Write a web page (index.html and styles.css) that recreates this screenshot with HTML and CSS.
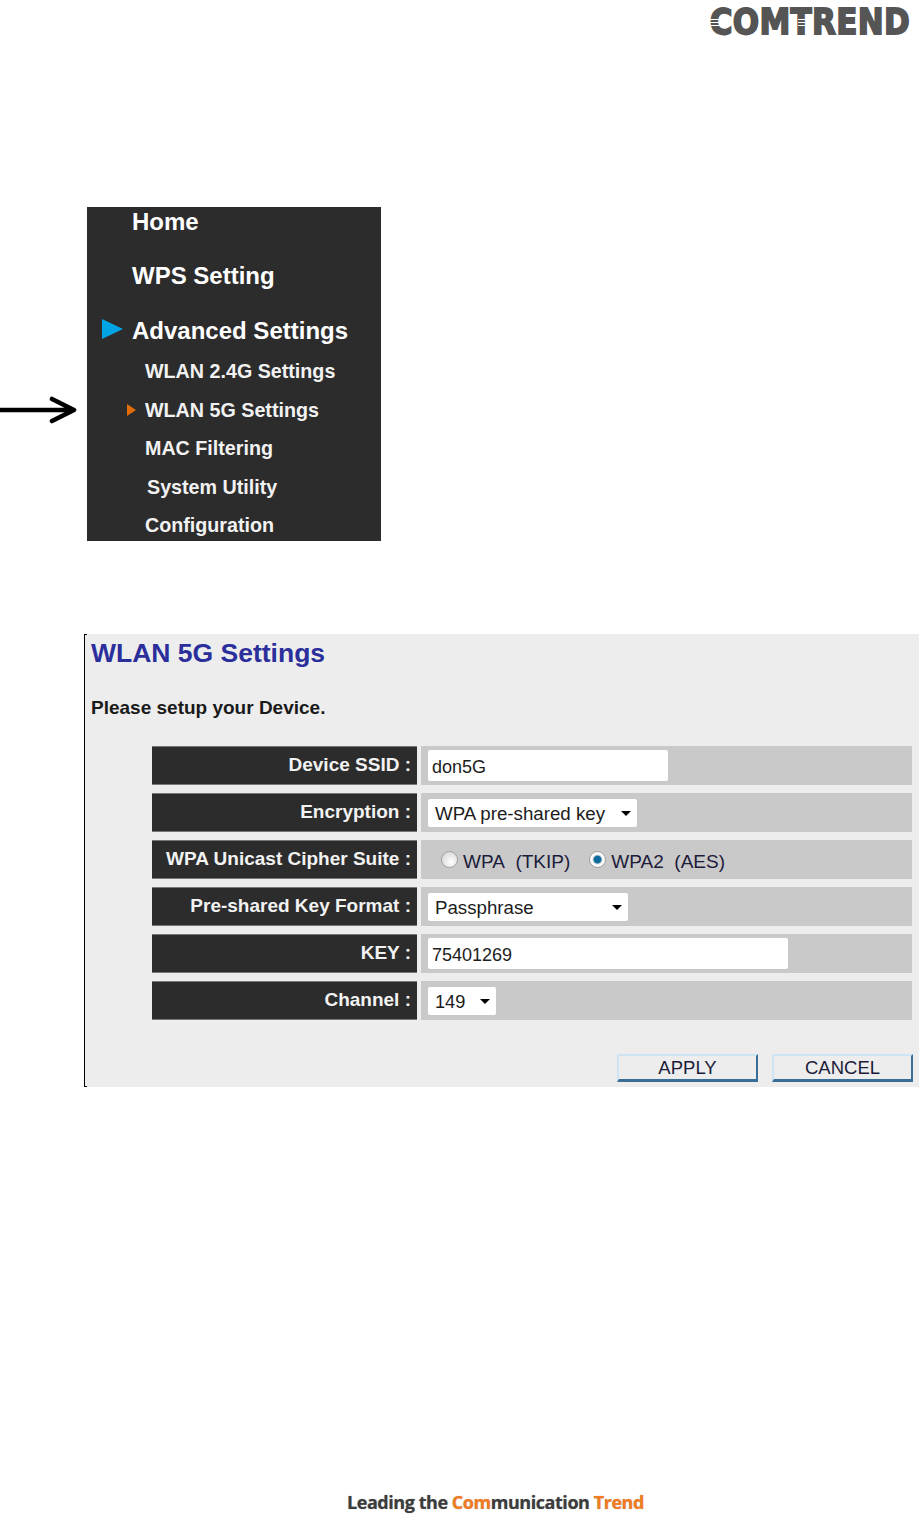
FILE: index.html
```html
<!DOCTYPE html>
<html lang="en">
<head>
    <meta charset="UTF-8">
    <meta name="viewport" content="width=device-width, initial-scale=1.0">
    <title>WLAN 5G Settings</title>
    <link rel="stylesheet" href="styles.css">
</head>
<body>
    <div class="header">
        <div class="logo">COMTREND</div>
    </div>

    <div class="menu-row">
        <svg class="pointer" width="77" height="30" viewBox="0 0 77 30">
            <path d="M0 15H73M52 4L74 15L52 26" fill="none" stroke="#000" stroke-width="4.6" stroke-linecap="round" stroke-linejoin="round"/>
        </svg>
        <div class="menu">
            <div class="menu-item">Home</div>
            <div class="menu-item">WPS Setting</div>
            <div class="menu-item active">Advanced Settings</div>
            <div class="sub-item">WLAN 2.4G Settings</div>
            <div class="sub-item current">WLAN 5G Settings</div>
            <div class="sub-item">MAC Filtering</div>
            <div class="sub-item shifted">System Utility</div>
            <div class="sub-item">Configuration</div>
        </div>
    </div>

    <div class="panel">
        <h1>WLAN 5G Settings</h1>
        <p class="intro">Please setup your Device.</p>

        <div class="form-table">
            <div class="label">Device SSID :</div>
            <div class="value"><input class="text-input ssid" type="text" value="don5G"></div>

            <div class="label">Encryption :</div>
            <div class="value"><span class="select encryption">WPA pre-shared key</span></div>

            <div class="label">WPA Unicast Cipher Suite :</div>
            <div class="value radios">
                <label class="radio-label"><span class="radio"></span>WPA&nbsp; (TKIP)</label>
                <label class="radio-label"><span class="radio checked"></span>WPA2&nbsp; (AES)</label>
            </div>

            <div class="label">Pre-shared Key Format :</div>
            <div class="value"><span class="select format">Passphrase</span></div>

            <div class="label">KEY :</div>
            <div class="value"><input class="text-input key" type="text" value="75401269"></div>

            <div class="label">Channel :</div>
            <div class="value"><span class="select channel">149</span></div>
        </div>

        <div class="buttons">
            <button>APPLY</button>
            <button>CANCEL</button>
        </div>
    </div>

    <div class="footer">Leading the <span class="orange">Com</span>munication <span class="orange">Trend</span></div>
</body>
</html>
```

FILE: styles.css
```css
body {
    margin: 0;
    min-height: 1527px;
    display: flex;
    flex-direction: column;
    font-family: "Liberation Sans", Arial, sans-serif;
    background: #ffffff;
    color: #000000;
}

.header {
    display: flex;
    justify-content: flex-end;
    padding: 4px 9px 0 0;
    height: 207px;
    box-sizing: border-box;
}

.logo {
    position: relative;
    height: 36px;
    font-family: "DejaVu Sans", sans-serif;
    font-weight: bold;
    font-size: 31px;
    line-height: 36px;
    letter-spacing: 0.3px;
    color: #555555;
    -webkit-text-stroke: 1.6px #555555;
    transform: scaleY(1.12);
}

/* white stripes cut through the C and the T */
.logo::before,
.logo::after {
    content: "";
    position: absolute;
    top: 15px;
    height: 7px;
    background: repeating-linear-gradient(to bottom, #ffffff 0, #ffffff 1px, transparent 1px, transparent 3px);
}

.logo::before {
    left: 0;
    width: 17px;
}

.logo::after {
    left: 88px;
    width: 8px;
}

/* menu */
.menu-row {
    display: flex;
    align-items: flex-start;
    gap: 10px;
}

.pointer {
    margin-top: 188px;
}

.menu {
    width: 294px;
    height: 334px;
    background: #2c2c2c;
    color: #ffffff;
    font-weight: bold;
    display: flex;
    flex-direction: column;
    box-sizing: border-box;
}

.menu-item {
    flex: none;
    height: 54px;
    line-height: 30px;
    padding-left: 45px;
    font-size: 24px;
    position: relative;
}

.menu-item.active {
    height: 37px;
    line-height: 32px;
}

.menu-item.active::before {
    content: "";
    position: absolute;
    left: 15px;
    top: 4px;
    border-left: 21px solid #00a4e4;
    border-top: 10px solid transparent;
    border-bottom: 10px solid transparent;
}

.sub-item {
    flex: none;
    height: 38.5px;
    line-height: 38px;
    padding-left: 58px;
    font-size: 19.7px;
    color: #f2f2f2;
    position: relative;
}

.sub-item:last-child {
    height: 35px;
}

.sub-item.shifted {
    padding-left: 60px;
}

.sub-item.current::before {
    content: "";
    position: absolute;
    left: 40px;
    top: 13px;
    border-left: 9px solid #e36c0a;
    border-top: 6px solid transparent;
    border-bottom: 6px solid transparent;
}

/* settings panel */
.panel {
    margin: 93px 0 0 84px;
    height: 453px;
    box-sizing: border-box;
    background: #ededed;
    border-left: 1px solid #000000;
    padding: 0 6px 0 6px;
    position: relative;
}

.panel::before,
.panel::after {
    content: "";
    position: absolute;
    left: -1px;
    width: 3px;
    height: 1px;
    background: #000000;
}

.panel::before {
    top: 0;
}

.panel::after {
    bottom: 0;
}

.panel h1 {
    margin: 0;
    height: 38px;
    line-height: 38px;
    font-size: 26.5px;
    color: #2b2f9c;
}

.intro {
    margin: 0;
    height: 74px;
    padding-top: 24px;
    box-sizing: border-box;
    line-height: 24px;
    font-size: 19px;
    font-weight: bold;
    color: #1a1a1a;
}

.form-table {
    margin-left: 61px;
    display: grid;
    grid-template-columns: 265px 491px;
    grid-auto-rows: 39px;
    column-gap: 4px;
    row-gap: 8px;
}

.label {
    background: #2c2c2c;
    border: 1px solid #777777;
    border-width: 1px 0;
    box-sizing: border-box;
    color: #f2f2f2;
    font-weight: bold;
    font-size: 19px;
    line-height: 36px;
    text-align: right;
    padding-right: 6px;
}

.value {
    background: #c9c9c9;
    display: flex;
    align-items: center;
    padding-left: 7px;
    font-size: 18.7px;
    color: #1c1c3a;
}

.text-input {
    height: 31px;
    border: none;
    box-sizing: border-box;
    padding: 3px 4px 0;
    font: 18px "Liberation Sans", Arial, sans-serif;
    color: #1c1c1c;
    background: #ffffff;
    border-radius: 2px;
}

.ssid {
    width: 240px;
}

.key {
    width: 360px;
}

.select {
    height: 28px;
    line-height: 30px;
    background: #ffffff;
    border-radius: 2px;
    padding-left: 7px;
    box-sizing: border-box;
    color: #1c1c1c;
    position: relative;
}

.select::after {
    content: "";
    position: absolute;
    right: 6px;
    top: 12px;
    border-top: 5px solid #000000;
    border-left: 5px solid transparent;
    border-right: 5px solid transparent;
}

.encryption {
    width: 209px;
}

.format {
    width: 200px;
}

.channel {
    width: 68px;
    font-size: 18.2px;
}

.radios {
    padding-left: 20px;
    gap: 19px;
    font-size: 19px;
}

.radio-label {
    display: flex;
    align-items: center;
    gap: 5px;
    padding-top: 5px;
}

.radio {
    width: 17px;
    height: 17px;
    margin-top: -5px;
    border-radius: 50%;
    box-sizing: border-box;
    border: 1px solid #9f9f9f;
    background: radial-gradient(circle at 60% 65%, #ffffff, #cfcfcf);
}

.radio.checked {
    background: radial-gradient(circle, #0a6a9c 0, #0a6a9c 32%, #e8e8e8 44%, #ffffff 60%, #cccccc 100%);
}

.buttons {
    display: flex;
    justify-content: flex-end;
    gap: 14px;
    margin-top: 34px;
}

.buttons button {
    width: 141px;
    height: 28px;
    box-sizing: border-box;
    padding: 0;
    background: #ededed;
    font: 18.5px "Liberation Sans", Arial, sans-serif;
    color: #1c1c3a;
    border-style: solid;
    border-width: 2px 2px 3px 2px;
    border-color: #cde4f5 #3b6e96 #3b6e96 #cde4f5;
}

.footer {
    margin-top: 403px;
    padding-left: 347px;
    line-height: 24px;
    font-family: "Open Sans", sans-serif;
    font-weight: bold;
    font-size: 18px;
    letter-spacing: -0.45px;
    color: #3c3c3c;
    text-shadow: 0 0 1px rgba(60, 60, 60, 0.5);
}

.orange {
    color: #f47b20;
}
```
